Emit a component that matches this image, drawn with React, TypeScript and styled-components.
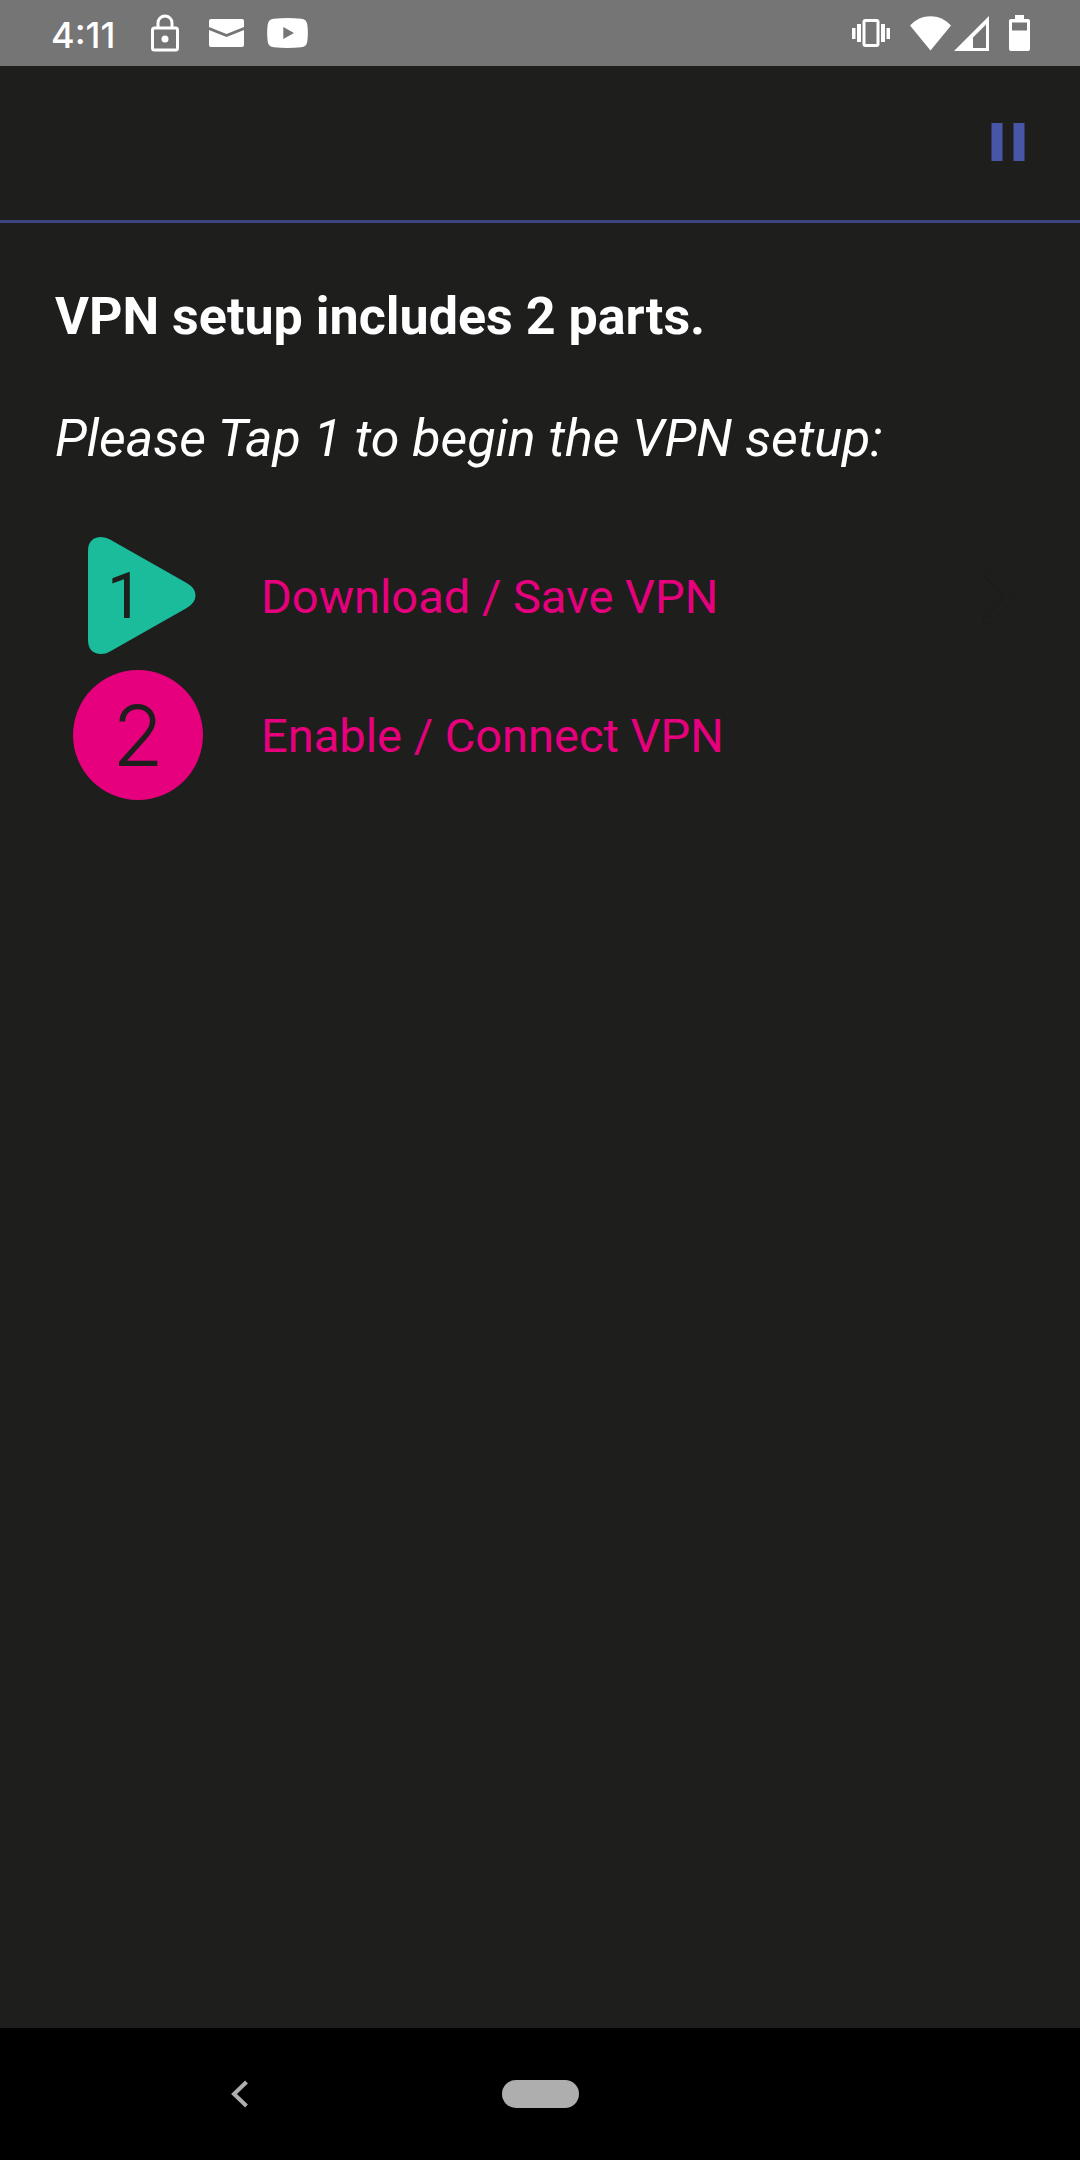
import React from "react";
import styled, { createGlobalStyle } from "styled-components";

const GlobalStyle = createGlobalStyle`
  *, *::before, *::after { box-sizing: border-box; }
  body {
    margin: 0;
    background: #1e1e1c;
    font-family: Roboto, "Liberation Sans", sans-serif;
  }
  svg { display: block; flex: none; }
  button {
    border: 0;
    padding: 0;
    background: none;
    font: inherit;
    color: inherit;
    text-align: left;
    cursor: pointer;
  }
`;

const Screen = styled.div`
  display: flex;
  flex-direction: column;
  min-height: 100vh;
  background: #1e1e1c;
`;

const StatusBar = styled.header`
  display: flex;
  align-items: center;
  justify-content: space-between;
  height: 66px;
  padding: 0 50px 0 51px;
  background: #757575;
  color: #fff;
`;

const StatusGroup = styled.div<{ $gap: number }>`
  display: flex;
  align-items: center;
  gap: ${(p) => p.$gap}px;
`;

const Clock = styled.time`
  min-width: 70px;
  font-family: Inter, sans-serif;
  font-size: 36px;
  font-weight: 500;
  line-height: 66px;
  padding-top: 3px;
`;

const Toolbar = styled.div`
  display: flex;
  align-items: center;
  justify-content: flex-end;
  height: 157px;
  padding: 0 44px 2px;
  border-bottom: 3px solid #3c4580;
`;

const IconButton = styled.button`
  display: flex;
  align-items: center;
  justify-content: center;
  color: #4856a8;
`;

const Content = styled.main`
  flex: 1;
  padding: 63px 55px;
  color: #fff;
`;

const Title = styled.h1`
  margin: 0 0 60px;
  font-size: 52px;
  line-height: 62px;
  font-weight: 700;
`;

const Prompt = styled.p`
  margin: 0 0 57px;
  font-size: 52px;
  line-height: 62px;
  font-style: italic;
`;

const Steps = styled.ol`
  display: flex;
  flex-direction: column;
  margin: 0;
  padding: 0;
  list-style: none;
`;

const StepButton = styled.button`
  display: flex;
  align-items: center;
  gap: 41px;
  width: 100%;
  height: 139px;
  color: #e6007e;
`;

const StepLabel = styled.span`
  flex: 1;
  font-size: 47px;
  line-height: 56px;
`;

const NavBar = styled.nav`
  display: grid;
  grid-template-columns: repeat(9, 1fr);
  align-items: center;
  height: 132px;
  background: #000;
  color: #aeaeae;
`;

const NavButton = styled.button<{ $column: string }>`
  grid-column: ${(p) => p.$column};
  display: flex;
  justify-content: center;
`;

const HomePill = styled.span`
  width: 77px;
  height: 28px;
  border-radius: 14px;
  background: #aeaeae;
`;

const LockIcon = () => (
  <svg width="28" height="38" viewBox="0 0 28 38" fill="none" stroke="currentColor">
    <rect x="1.5" y="14" width="25" height="22" rx="2" strokeWidth="3" />
    <path d="M7 14V9a7 7 0 0 1 14 0v5" strokeWidth="3" />
    <circle cx="14" cy="25" r="3.5" fill="currentColor" stroke="none" />
  </svg>
);

const MailIcon = () => (
  <svg width="35" height="28" viewBox="0 0 35 28" fill="currentColor">
    <path d="M2 0H33a2 2 0 0 1 2 2V8L17.5 15 0 8V2a2 2 0 0 1 2-2Z" />
    <path d="M0 11 17.5 18 35 11V26a2 2 0 0 1-2 2H2a2 2 0 0 1-2-2Z" />
  </svg>
);

const VideoIcon = () => (
  <svg width="41" height="30" viewBox="0 0 41 30" fill="currentColor" fillRule="evenodd">
    <path d="M7 .7Q20.5-.7 34 .7 39.5 1 40.3 6.5 41.4 15 40.3 23.5 39.5 29 34 29.3 20.5 30.7 7 29.3 1.5 29 .7 23.5-.4 15 .7 6.5 1.5 1 7 .7ZM16.3 9V21L27 15Z" />
  </svg>
);

const VibrateIcon = () => (
  <svg width="38" height="28" viewBox="0 0 38 28" fill="currentColor">
    <rect x="12" y="1.5" width="14" height="25" rx="1.5" fill="none" stroke="currentColor" strokeWidth="3" />
    <rect x="5" y="5" width="4" height="18" />
    <rect x="29" y="5" width="4" height="18" />
    <rect x="0" y="9" width="3.5" height="11" />
    <rect x="34.5" y="9" width="3.5" height="11" />
  </svg>
);

const WifiIcon = () => (
  <svg width="41" height="35" viewBox="0 0 41 35" fill="currentColor">
    <path d="M20.5 34.5 0 9.5C11-3 30-3 41 9.5Z" />
  </svg>
);

const SignalIcon = () => (
  <svg width="35" height="35" viewBox="0 0 35 35" fill="currentColor" fillRule="evenodd">
    <path d="M35 0V35H0ZM32 8.500 19 21.500V32H32Z" />
  </svg>
);

const BatteryIcon = () => (
  <svg width="21" height="36" viewBox="0 0 21 36" fill="currentColor" fillRule="evenodd">
    <path d="M6 0H15V4H19a2 2 0 0 1 2 2V34a2 2 0 0 1-2 2H2a2 2 0 0 1-2-2V6a2 2 0 0 1 2-2H6ZM3 7.5V15.5H18V7.5Z" />
  </svg>
);

const PauseIcon = () => (
  <svg width="48" height="40" viewBox="0 0 48 40" fill="currentColor">
    <rect x="3.5" y="1" width="11" height="38" />
    <rect x="25.5" y="1" width="11" height="38" />
  </svg>
);

const BadgeOne = () => (
  <svg width="165" height="139" viewBox="0 0 165 139" aria-hidden="true">
    <path
      d="M33 24C33 15 38 10 46 10Q51 10 55 12.5L131.700 56Q140.500 61 140.500 68.500Q140.500 76 131.700 81L55 124.500Q51 127 46 127C38 127 33 122 33 113Z"
      fill="#1bbc9b"
    />
    <text x="52" y="91" fontFamily="Roboto, sans-serif" fontSize="64" fill="#1e1e1c">1</text>
  </svg>
);

const BadgeTwo = () => (
  <svg width="165" height="139" viewBox="0 0 165 139" aria-hidden="true">
    <circle cx="83" cy="69" r="65" fill="#e6007e" />
    <text x="83" y="100" textAnchor="middle" fontFamily="Inter, sans-serif" fontSize="84" fontWeight="300" fill="#1e1e1c">
      2
    </text>
  </svg>
);

const ChevronIcon = () => (
  <svg width="44" height="56" viewBox="0 0 44 56" fill="#1e1e1c" stroke="#1a1a18" aria-hidden="true">
    <path d="M1 5 5 1H8L33 26V30L8 55H3L1 51 23 28Z" />
  </svg>
);

const BackIcon = () => (
  <svg width="18" height="28" viewBox="0 0 18 28" fill="none" stroke="currentColor" strokeWidth="4">
    <path d="M15.5 2 3 14l12.5 12" />
  </svg>
);

const steps = [
  { label: "Download / Save VPN", Badge: BadgeOne, current: true },
  { label: "Enable / Connect VPN", Badge: BadgeTwo, current: false },
];

export default function App() {
  return (
    <Screen>
      <GlobalStyle />
      <StatusBar>
        <StatusGroup $gap={30}>
          <Clock>4:11</Clock>
          <LockIcon />
          <StatusGroup $gap={23}>
            <MailIcon />
            <VideoIcon />
          </StatusGroup>
        </StatusGroup>
        <StatusGroup $gap={20}>
          <VibrateIcon />
          <StatusGroup $gap={3}>
            <WifiIcon />
            <SignalIcon />
          </StatusGroup>
          <BatteryIcon />
        </StatusGroup>
      </StatusBar>
      <Toolbar>
        <IconButton type="button" aria-label="Pause">
          <PauseIcon />
        </IconButton>
      </Toolbar>
      <Content>
        <Title>VPN setup includes 2 parts.</Title>
        <Prompt>Please Tap 1 to begin the VPN setup:</Prompt>
        <Steps>
          {steps.map(({ label, Badge, current }) => (
            <li key={label}>
              <StepButton type="button">
                <Badge />
                <StepLabel>{label}</StepLabel>
                {current && <ChevronIcon />}
              </StepButton>
            </li>
          ))}
        </Steps>
      </Content>
      <NavBar>
        <NavButton type="button" aria-label="Back" $column="2 / span 2">
          <BackIcon />
        </NavButton>
        <NavButton type="button" aria-label="Home" $column="5">
          <HomePill />
        </NavButton>
      </NavBar>
    </Screen>
  );
}
